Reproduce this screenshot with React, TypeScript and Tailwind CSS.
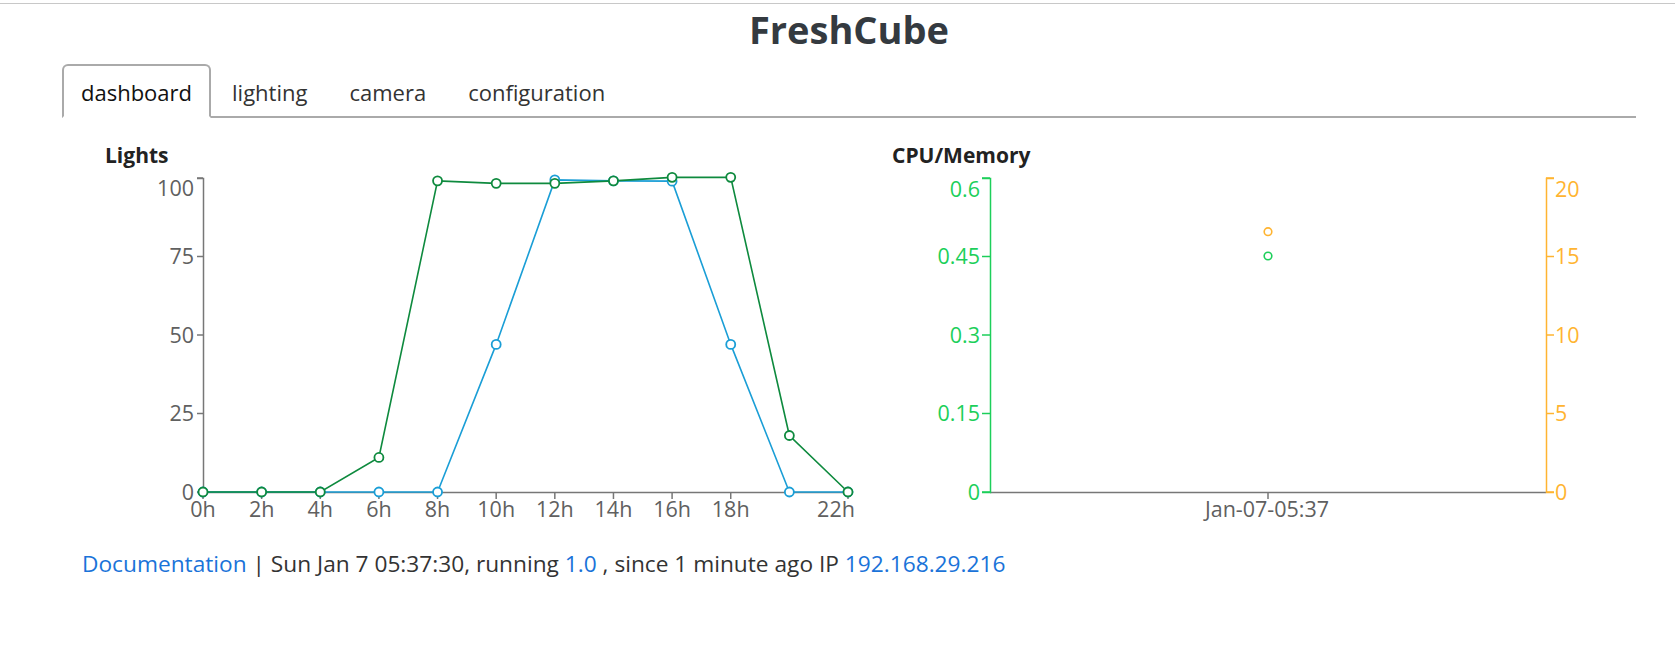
import React from "react";

const FONT = { fontFamily: '"Open Sans", "Noto Sans", Arial, sans-serif' };

const hours = [0, 2, 4, 6, 8, 10, 12, 14, 16, 18, 20, 22];
const green = [0, 0, 0, 11, 99.1, 98.3, 98.3, 99.1, 100.2, 100.2, 18, 0];
const blue = [0, 0, 0, 0, 0, 47, 99.4, 99.1, 99, 47, 0, 0];

const lx = (h: number) => 141 + h * (645 / 22);
const ly = (v: number) => 323 - v * 3.14;

function LightsChart() {
  const gPts = hours.map((h, i) => `${lx(h)},${ly(green[i])}`).join(" ");
  const bPts = hours.map((h, i) => `${lx(h)},${ly(blue[i])}`).join(" ");
  const yTicks = [
    { v: 100, ly: 19 },
    { v: 75, ly: ly(75) },
    { v: 50, ly: ly(50) },
    { v: 25, ly: ly(25) },
    { v: 0, ly: ly(0) },
  ];
  const xTicks = [0, 2, 4, 6, 8, 10, 12, 14, 16, 18, 22];
  return (
    <svg width="790" height="360" viewBox="0 0 790 360" style={{ ...FONT, overflow: "visible" }}>
      <path d={`M135,9.5H141.5V323.5H135`} fill="none" stroke="#777" strokeWidth="1.5" />
      {yTicks.map((t) => (
        <g key={t.v}>
          <line x1="135" x2="141" y1={ly(t.v)} y2={ly(t.v)} stroke="#777" strokeWidth="1.5" />
          <text x="132" y={t.ly} dy="0.35em" textAnchor="end" fontSize="21.5" fill="#606060">
            {t.v}
          </text>
        </g>
      ))}
      <line x1="141" x2="786" y1="323.5" y2="323.5" stroke="#777" strokeWidth="1.5" />
      {xTicks.map((h) => (
        <g key={h}>
          <line x1={lx(h)} x2={lx(h)} y1="323" y2="330" stroke="#777" strokeWidth="1.5" />
          <text
            x={h === 22 ? lx(h) - 12 : lx(h)}
            y="348"
            textAnchor="middle"
            fontSize="21.5"
            fill="#606060"
          >
            {h}h
          </text>
        </g>
      ))}
      <polyline points={bPts} fill="none" stroke="#1a9ed6" strokeWidth="1.6" />
      {hours.map((h, i) => (
        <circle key={"b" + h} cx={lx(h)} cy={ly(blue[i])} r="4.5" fill="#fff" stroke="#1a9ed6" strokeWidth="1.8" />
      ))}
      <polyline points={gPts} fill="none" stroke="#0e8a3e" strokeWidth="1.6" />
      {hours.map((h, i) => (
        <circle key={"g" + h} cx={lx(h)} cy={ly(green[i])} r="4.5" fill="#fff" stroke="#0e8a3e" strokeWidth="1.8" />
      ))}
    </svg>
  );
}

function CpuChart() {
  const cy = (f: number) => 323 - f * 314;
  const left = [
    { t: "0.6", y: 20, f: 1 },
    { t: "0.45", y: cy(0.75), f: 0.75 },
    { t: "0.3", y: cy(0.5), f: 0.5 },
    { t: "0.15", y: cy(0.25), f: 0.25 },
    { t: "0", y: cy(0), f: 0 },
  ];
  const right = [
    { t: "20", y: 20, f: 1 },
    { t: "15", y: cy(0.75), f: 0.75 },
    { t: "10", y: cy(0.5), f: 0.5 },
    { t: "5", y: cy(0.25), f: 0.25 },
    { t: "0", y: cy(0), f: 0 },
  ];
  const G = "#1ccf5a";
  const O = "#ffb431";
  return (
    <svg width="784" height="360" viewBox="0 0 784 360" style={{ ...FONT, overflow: "visible" }}>
      <line x1="138" x2="694" y1="323.5" y2="323.5" stroke="#777" strokeWidth="1.5" />
      <line x1="416" x2="416" y1="323" y2="330" stroke="#777" strokeWidth="1.5" />
      <text x="415" y="348" textAnchor="middle" fontSize="21.5" fill="#606060">
        Jan-07-05:37
      </text>
      <path d="M130,9.5H138.5V323.5H130" fill="none" stroke={G} strokeWidth="1.5" />
      {left.map((t) => (
        <g key={t.t}>
          <line x1="130" x2="138" y1={cy(t.f)} y2={cy(t.f)} stroke={G} strokeWidth="1.5" />
          <text x="128" y={t.y} dy="0.35em" textAnchor="end" fontSize="21.5" fill={G}>
            {t.t}
          </text>
        </g>
      ))}
      <path d="M702,9.5H694.5V323.5H702" fill="none" stroke={O} strokeWidth="1.5" />
      {right.map((t) => (
        <g key={t.t}>
          <line x1="694" x2="702" y1={cy(t.f)} y2={cy(t.f)} stroke={O} strokeWidth="1.5" />
          <text x="703" y={t.y} dy="0.35em" textAnchor="start" fontSize="21.5" fill={O}>
            {t.t}
          </text>
        </g>
      ))}
      <circle cx="416" cy="62.7" r="3.8" fill="#fff" stroke={O} strokeWidth="1.6" />
      <circle cx="416" cy="87" r="3.8" fill="#fff" stroke={G} strokeWidth="1.6" />
    </svg>
  );
}

export default function App() {
  const tabs = ["dashboard", "lighting", "camera", "configuration"];
  return (
    <div className="w-full h-[647px] bg-white text-[#333]" style={FONT}>
      <div className="h-[4px] border-b border-[#c8c8c8]" />
      <div className="ml-[62px] w-[1574px]">
        <h1 className="mt-[2px] text-center text-[38px] leading-[46px] font-bold text-[#343a40]">
          FreshCube
        </h1>
        <ul className="mt-[12px] flex border-b-2 border-[#aaa]">
          {tabs.map((t, i) => (
            <li key={t} className="-mb-[2px]">
              <div
                className={
                  i === 0
                    ? "px-[17px] pt-[11px] pb-[9px] text-[22px] leading-[30px] border-2 border-[#aaa] border-b-white rounded-t-[6px] bg-white text-[#111]"
                    : "px-[19px] pt-[11px] pb-[9px] text-[22px] leading-[30px] border-2 border-transparent text-[#333]"
                }
              >
                {t}
              </div>
            </li>
          ))}
        </ul>
        <div className="flex">
          <div className="w-[790px]">
            <div className="mt-[23px] pl-[43px] text-[21px] leading-[28px] font-bold text-[#222]">
              Lights
            </div>
            <LightsChart />
          </div>
          <div className="w-[784px]">
            <div className="mt-[23px] pl-[40px] text-[21px] leading-[28px] font-bold text-[#222]">
              CPU/Memory
            </div>
            <CpuChart />
          </div>
        </div>
        <div className="mt-[20px] pl-[20px] text-[22.7px] leading-[30px] text-[#333]">
          <a className="text-[#1a73d9]">Documentation</a> | Sun Jan 7 05:37:30, running{" "}
          <a className="text-[#1a73d9]">1.0</a> , since 1 minute ago IP{" "}
          <a className="text-[#1a73d9]">192.168.29.216</a>
        </div>
      </div>
    </div>
  );
}
